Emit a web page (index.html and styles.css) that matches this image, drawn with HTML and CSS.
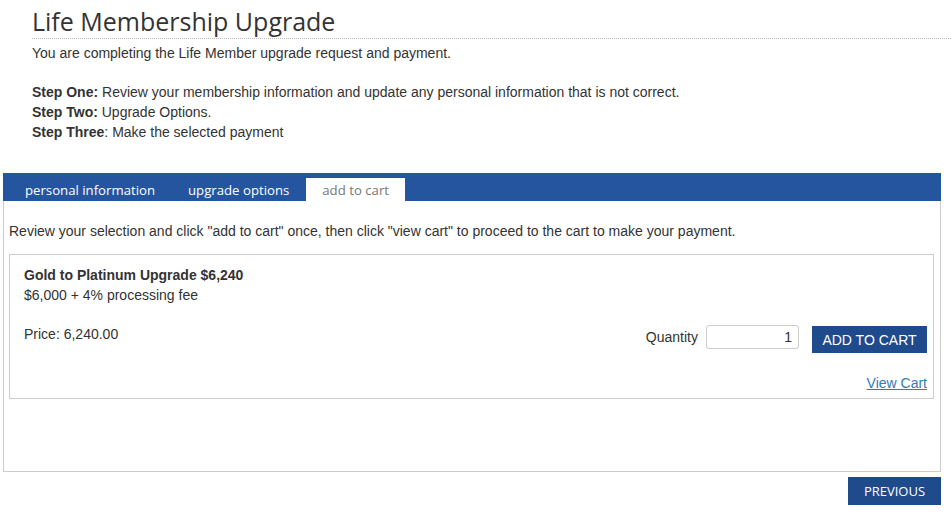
FILE: index.html
```html
<!DOCTYPE html>
<html>
<head>
<meta charset="utf-8">
<link rel="stylesheet" href="styles.css">
</head>
<body>
<div class="header">
  <h1 class="title">Life Membership Upgrade</h1>
  <p class="intro">You are completing the Life Member upgrade request and payment.</p>
  <ul class="steps">
    <li><b>Step One:</b> Review your membership information and update any personal information that is not correct.</li>
    <li><b>Step Two:</b> Upgrade Options.</li>
    <li><b>Step Three</b>: Make the selected payment</li>
  </ul>
</div>
<div class="main">
  <div class="tabbar">
    <span class="tab">personal information</span>
    <span class="tab">upgrade options</span>
    <span class="tab active">add to cart</span>
  </div>
  <div class="panel">
    <p class="lead">Review your selection and click "add to cart" once, then click "view cart" to proceed to the cart to make your payment.</p>
    <div class="product">
      <div class="pname">Gold to Platinum Upgrade $6,240</div>
      <div class="pdesc">$6,000 + 4% processing fee</div>
      <div class="prow">
        <div class="price">Price: 6,240.00</div>
        <div class="buy">
          <label class="qlabel">Quantity</label>
          <input class="qty" type="text" value="1">
          <button class="btn addcart">ADD TO CART</button>
        </div>
      </div>
      <div class="viewrow"><a class="viewcart" href="#">View Cart</a></div>
    </div>
  </div>
  <div class="footer">
    <button class="btn prev">PREVIOUS</button>
  </div>
</div>
</body>
</html>
```

FILE: styles.css
```css
html, body {
  margin: 0;
  padding: 0;
  background: #fff;
}
body {
  font-family: "Liberation Sans", Arial, sans-serif;
  font-size: 14px;
  line-height: 20px;
  color: #333;
}
.header {
  padding-left: 32px;
  padding-top: 4px;
}
.title {
  margin: 0;
  font-family: "Open Sans", "Noto Sans", sans-serif;
  font-weight: 400;
  font-size: 25px;
  line-height: 34px;
  color: #333;
  border-bottom: 1px dotted #bbb;
}
.intro {
  margin: 4px 0 19px;
}
.steps {
  list-style: none;
  margin: 0;
  padding: 0;
}
.main {
  padding: 31px 10px 0 3px;
}
.tabbar {
  background: #2655a0;
  height: 28px;
  display: flex;
  align-items: flex-end;
  padding-left: 6px;
}
.tab {
  font-family: "Open Sans", "Noto Sans", sans-serif;
  font-size: 13.2px;
  color: #fff;
  padding: 0 16px;
  height: 23px;
  line-height: 25px;
  margin-right: 1px;
}
.tab.active {
  background: #fff;
  color: #777;
}
.panel {
  box-sizing: border-box;
  height: 271px;
  border: 1px solid #ccc;
  border-top: none;
  padding: 20px 6px 0 5px;
}
.lead {
  margin: 0 0 13px;
}
.product {
  border: 1px solid #ccc;
  padding: 10px 6px 5px 14px;
}
.pname {
  font-weight: bold;
}
.prow {
  display: flex;
  justify-content: space-between;
  align-items: flex-start;
  margin-top: 19px;
}
.buy {
  display: flex;
  align-items: flex-start;
  margin-top: 1px;
}
.qlabel {
  margin-right: 8px;
  margin-top: 2px;
}
.qty {
  width: 93px;
  height: 24px;
  box-sizing: border-box;
  border: 1px solid #ccc;
  border-radius: 3px;
  text-align: right;
  font-family: "Liberation Sans", Arial, sans-serif;
  font-size: 14px;
  color: #333;
  padding: 0 6px;
  margin: 0 13px 0 0;
}
.btn {
  background: #1f4a8c;
  color: #fff;
  border: none;
  border-radius: 0;
  cursor: pointer;
}
.addcart {
  width: 115px;
  height: 27px;
  font-family: "Liberation Sans", Arial, sans-serif;
  font-size: 14px;
  margin: 1px 0 0;
  padding: 0;
}
.viewrow {
  text-align: right;
  margin-top: 20px;
}
.viewcart {
  color: #337ab7;
  text-decoration: underline;
}
.footer {
  display: flex;
  justify-content: flex-end;
  padding-top: 5px;
}
.prev {
  width: 93px;
  height: 28px;
  font-family: "Open Sans", "Noto Sans", sans-serif;
  font-size: 13px;
  padding: 0;
}
```
